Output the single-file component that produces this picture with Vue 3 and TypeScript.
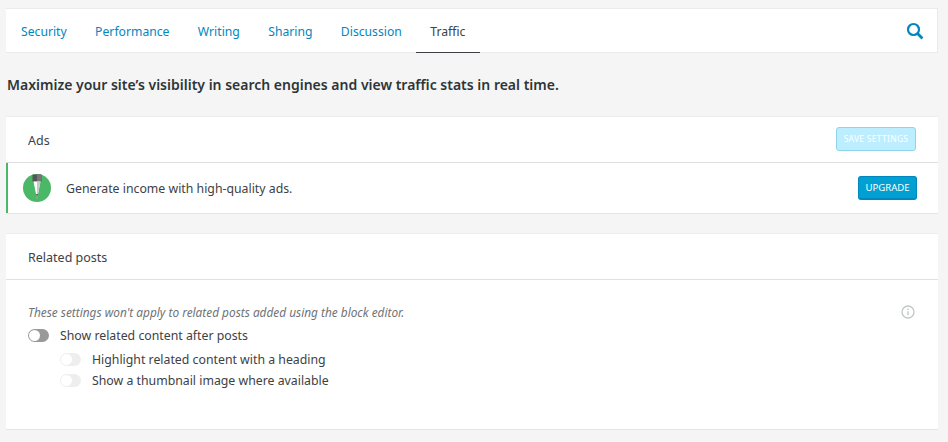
<script setup lang="ts">
const tabs: string[] = ['Security', 'Performance', 'Writing', 'Sharing', 'Discussion', 'Traffic']
</script>

<template>
  <div class="page">
    <nav class="nav">
      <div class="tabs">
        <a v-for="t in tabs" :key="t" class="tab" :class="{ active: t === 'Traffic' }">{{ t }}</a>
      </div>
      <svg class="search" width="18" height="18" viewBox="0 0 18 18" fill="none">
        <circle cx="7.5" cy="7.5" r="5.5" stroke="#0087be" stroke-width="2.2" />
        <path d="M11.6 11.6 16.4 16.4" stroke="#0087be" stroke-width="2.8" />
      </svg>
    </nav>

    <h1 class="lead">Maximize your site’s visibility in search engines and view traffic stats in real time.</h1>

    <section class="card ads">
      <header class="head">
        <span class="head-title">Ads</span>
        <button class="btn save">SAVE SETTINGS</button>
      </header>
      <div class="notice">
        <svg class="pen" width="28" height="28" viewBox="0 0 28 28">
          <circle cx="14" cy="14" r="14" fill="#4ab866" />
          <path d="M9.5 0.5h9v7h-9z" fill="#555" />
          <path d="M14 0.5h4.5v7H14z" fill="#777" />
          <path d="M10.5 7.5h7L14 25z" fill="#fff" />
          <path d="M14 7.5h3.5L14 25z" fill="#c8c8c8" />
          <path d="M13 20h2l-1 5z" fill="#666" />
        </svg>
        <span class="notice-text">Generate income with high-quality ads.</span>
        <button class="btn upgrade">UPGRADE</button>
      </div>
    </section>

    <section class="card related">
      <header class="head"><span class="head-title">Related posts</span></header>
      <div class="body">
        <div class="col">
          <p class="note">These settings won't apply to related posts added using the block editor.</p>
          <div class="row main"><i class="toggle on"></i><span>Show related content after posts</span></div>
          <div class="row sub first"><i class="toggle off"></i><span>Highlight related content with a heading</span></div>
          <div class="row sub"><i class="toggle off"></i><span>Show a thumbnail image where available</span></div>
        </div>
        <svg class="info" width="14" height="14" viewBox="0 0 14 14" fill="none">
          <circle cx="7" cy="7" r="6" stroke="#c3c6c8" stroke-width="1.3" />
          <path d="M7 6.2v4" stroke="#c3c6c8" stroke-width="1.4" />
          <path d="M7 3.4v1.5" stroke="#c3c6c8" stroke-width="1.4" />
        </svg>
      </div>
    </section>
  </div>
</template>

<style>
html, body { margin: 0; background: #f5f5f5; }
</style>

<style scoped>
.page {
  padding: 8px 10px 0 6px;
  font-family: "Noto Sans", "Open Sans", sans-serif;
  color: #3d4145;
  font-size: 13px;
  height: 434px;
  overflow: hidden;
}
.nav {
  height: 45px;
  background: #fff;
  box-sizing: border-box;
  border: 1px solid #e9eaeb;
  border-left: none;
  display: flex;
  justify-content: space-between;
  align-items: stretch;
}
.tabs { display: flex; padding-left: 0.8px; }
.tab {
  padding: 0 14.2px;
  margin-bottom: -1px;
  line-height: 45px;
  color: #0087be;
  font-size: 12.2px;
  white-space: nowrap;
  box-sizing: border-box;
}
.active { color: #3d4145; border-bottom: 1px solid #3d4145; }
.search { align-self: center; margin-right: 13px; }
.lead {
  margin: 0;
  padding: 0 0 0 1px;
  height: 64px;
  line-height: 64px;
  font-size: 14px;
  font-weight: 600;
  color: #2e3538;
  white-space: nowrap;
}
.card {
  background: #fff;
  border-bottom: 1px solid #e4e5e6;
  box-shadow: 0 -1px 0 #eceded;
}
.ads { height: 96px; }
.head {
  height: 46px;
  box-sizing: border-box;
  border-bottom: 1px solid #dfe0e1;
  padding: 0 22px;
  display: flex;
  justify-content: space-between;
  align-items: center;
  font-size: 12.5px;
}
.head-title { padding-top: 2px; }
.btn {
  font-family: inherit;
  font-size: 8.5px;
  border-radius: 3px;
  padding: 0;
  color: #fff;
  cursor: pointer;
}
.save {
  width: 80px;
  height: 24px;
  background: #bdeeff;
  border: 1px solid #8fd3ec;
  letter-spacing: 0.28px;
  margin-top: -2px;
}
.notice {
  height: 50px;
  box-sizing: border-box;
  border-left: 2px solid #4ab866;
  padding: 0 21px 0 15px;
  display: flex;
  align-items: center;
  font-size: 12.3px;
}
.pen { flex: none; }
.notice-text { margin-left: 15px; flex: 1; }
.upgrade {
  width: 59px;
  height: 24px;
  background: #00a0d2;
  border: 1px solid #0087be;
  border-bottom-width: 2px;
  font-size: 9.6px;
}
.related { margin-top: 20px; height: 195px; }
.body {
  display: flex;
  justify-content: space-between;
  padding: 23px 23px 0 22px;
}
.col { min-width: 0; }
.note {
  margin: 0;
  font-style: italic;
  font-size: 11.85px;
  line-height: 18px;
  color: #6f7376;
}
.row { display: flex; align-items: center; height: 21px; font-size: 12.3px; }
.main { margin-top: 4px; }
.sub { padding-left: 32px; }
.sub.first { margin-top: 3px; }
.toggle {
  position: relative;
  display: block;
  width: 21px;
  height: 13px;
  border-radius: 7px;
  margin-right: 11px;
  flex: none;
}
.toggle::after {
  content: "";
  position: absolute;
  left: 1px;
  top: 1px;
  width: 11px;
  height: 11px;
  border-radius: 50%;
  background: #fff;
}
.on { background: #98999b; }
.off { background: #eeeeee; }
.info { margin-top: 2px; }
</style>
